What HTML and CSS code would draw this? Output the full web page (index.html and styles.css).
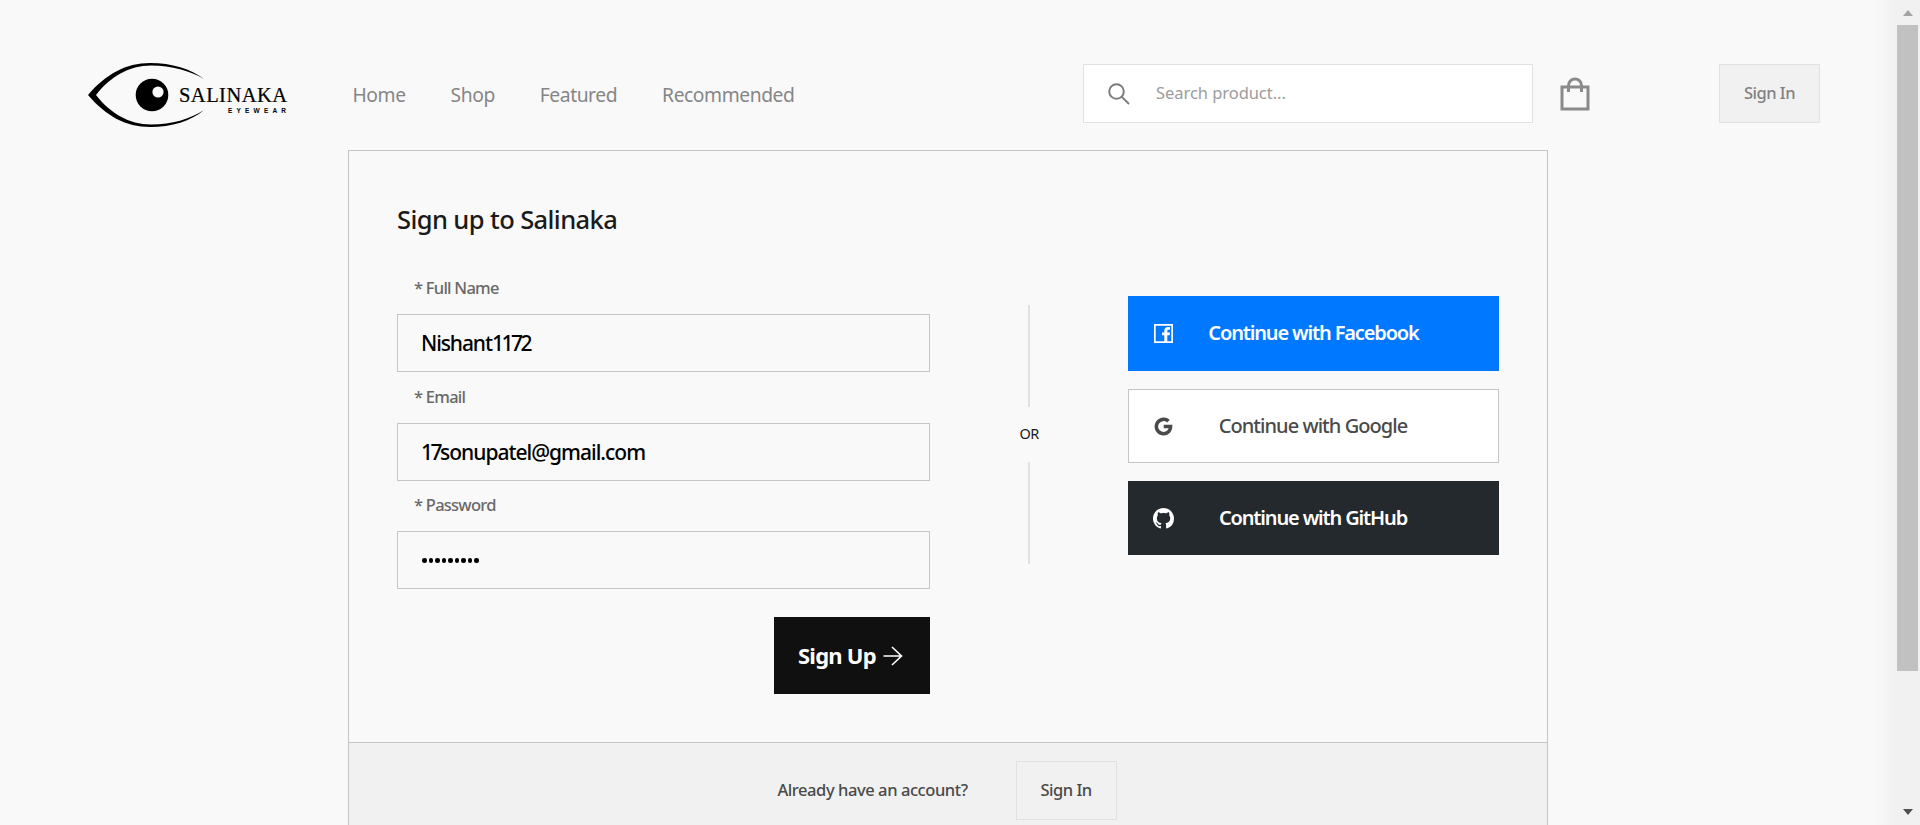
FILE: index.html
```html
<!DOCTYPE html>
<html lang="en">
<head>
<meta charset="utf-8">
<title>Sign up to Salinaka</title>
<link rel="stylesheet" href="styles.css">
</head>
<body>
<div class="app">
  <div class="page">
    <header class="navigation">
      <svg class="logo" viewBox="0 0 204 70" width="204" height="70">
        <path d="M0 35C18 14 38 3 62 3C84 3 103 9 116 19C102 11 84 5.500 63 5.500C41 5.500 22 17 8 35C22 53 41 64.500 63 64.500C84 64.500 102 59 116 50C103 61 84 67 62 67C38 67 18 56 0 35Z"/>
        <circle cx="64" cy="35" r="16.300"/>
        <circle class="logo-glint" cx="70" cy="32" r="5.600"/>
        <text class="logo-name" x="91" y="42" textLength="108">SALINAKA</text>
        <text class="logo-sub" x="140" y="53.300" textLength="58">EYEWEAR</text>
      </svg>
      <nav class="menu">
        <a>Home</a><a>Shop</a><a>Featured</a><a>Recommended</a>
      </nav>
      <div class="searchbar">
        <svg viewBox="0 0 22 22" width="22" height="22"><circle cx="8.500" cy="8.500" r="7.300"/><path d="M13.600 13.600L21 21"/></svg>
        <span>Search product...</span>
      </div>
      <svg class="bag" viewBox="0 0 30 34" width="30" height="34"><path d="M2 10H28V32H2ZM8.500 15V8.500a6.500 6.500 0 0 1 13 0V15"/></svg>
      <button class="btn-light btn-muted">Sign In</button>
    </header>
    <main class="card">
      <section class="signup">
        <form class="form">
          <h1>Sign up to Salinaka</h1>
          <label class="label">* Full Name</label>
          <div class="field"><span>Nishant<span class="digits">1172</span></span></div>
          <label class="label">* Email</label>
          <div class="field field-email"><span><span class="digits">17</span>sonupatel@gmail.com</span></div>
          <label class="label">* Password</label>
          <div class="field dots"><i></i><i></i><i></i><i></i><i></i><i></i><i></i><i></i><i></i></div>
          <button class="submit"><span>Sign Up</span>
            <svg viewBox="0 0 20 20" width="20" height="20"><path d="M0.500 10H18.500M9 1L18.500 10L9 19"/></svg></button>
        </form>
        <div class="divider"><span class="line"></span><span class="or">OR</span><span class="line"></span></div>
        <div class="social">
          <button class="provider facebook"><svg viewBox="0 0 19 19" width="19" height="19"><path fill-rule="evenodd" d="M0 0H19V19H0ZM1.700 1.700V17.300H10.300V11.300H8V8.600H10.300V6.800C10.300 4.300 11.700 3 14 3H16V5.700H14.600C13.700 5.700 13.300 6.100 13.300 7V8.600H16L15.600 11.300H13.300V17.300H17.300V1.700Z"/></svg><span>Continue with Facebook</span></button>
          <button class="provider google"><svg viewBox="0 0 19 19" width="19" height="19"><path d="M9.700 7.800H18.300C18.900 13.500 15.500 18.500 9.600 18.500A9 9 0 1 1 15.700 2.900L13.100 5.400A5.400 5.400 0 1 0 14.700 11.200H9.700Z"/></svg><span>Continue with Google</span></button>
          <button class="provider github"><svg viewBox="0 0 16 16" width="21" height="21"><path d="M8 0C3.580 0 0 3.580 0 8c0 3.540 2.290 6.530 5.470 7.590.4.070.55-.17.55-.38 0-.19-.01-.82-.01-1.490-2.010.37-2.530-.49-2.690-.94-.09-.23-.48-.94-.82-1.130-.28-.15-.68-.52-.01-.53.63-.01 1.080.58 1.230.82.720 1.210 1.870.87 2.330.66.070-.52.28-.87.51-1.070-1.780-.2-3.640-.89-3.640-3.950 0-.87.31-1.590.82-2.150-.08-.2-.36-1.020.08-2.120 0 0 .67-.21 2.200.82.640-.18 1.320-.27 2-.27s1.360.09 2 .27c1.530-1.040 2.200-.82 2.200-.82.440 1.100.16 1.920.08 2.120.51.560.82 1.270.82 2.150 0 3.070-1.870 3.750-3.650 3.950.29.250.54.730.54 1.480 0 1.070-.01 1.930-.01 2.200 0 .21.150.46.550.38A8.010 8.010 0 0 0 16 8c0-4.420-3.580-8-8-8z"/></svg><span>Continue with GitHub</span></button>
        </div>
      </section>
      <footer class="signin"><span class="signin-text">Already have an account?</span><button class="btn-light">Sign In</button></footer>
    </main>
  </div>
  <aside class="scrollbar"><span class="arrow up"></span><span class="thumb"></span><span class="arrow down"></span></aside>
</div>
</body>
</html>
```
FILE: styles.css
```css
* { box-sizing: border-box; }
body { margin: 0; background: #f9f9f9; color: #1a1a1a; font-family: "Noto Sans", "Open Sans", sans-serif; overflow: hidden; }
button { font: inherit; border: 0; padding: 0; border-radius: 0; }
.app { display: flex; height: 825px; overflow: hidden; }
.page { width: 1895px; height: 825px; overflow: hidden; background: linear-gradient(to right, #f9f9f9 1875px, #f0f0f0 1895px); }
.navigation { display: flex; align-items: center; height: 150px; padding: 37px 75px 0 88px; }
.logo { flex: none; margin-top: 3px; }
.logo-glint { fill: #f9f9f9; }
.logo-name { font: 20.500px "Liberation Serif", serif; stroke: #000; stroke-width: 0.2; }
.logo-sub { font: bold 6.500px "Liberation Sans", sans-serif; }
.menu { display: flex; margin: 1px 0 0 60.500px; gap: 45px; font-size: 19.300px; letter-spacing: -0.45px; font-weight: 450; color: #868686; }
.searchbar { display: flex; align-items: center; width: 450px; height: 59px; margin-left: auto; padding-left: 24px; gap: 26px; background: #fff; border: 1px solid #e1e1e1; font-size: 16.500px; color: #9c9c9c; letter-spacing: -0.05px; }
.searchbar span { padding-bottom: 2px; }
.searchbar svg { fill: none; stroke: #7d7d7d; stroke-width: 2; }
.bag { margin: 0 129px 0 27px; fill: none; stroke: #8a8a8a; stroke-width: 3; }
.btn-light { width: 101px; height: 59px; padding-bottom: 3px; background: #f1f1f1; border: 1px solid #e1e1e1; color: #4a4a4a; font-size: 16.500px; font-weight: 500; letter-spacing: -0.5px; }
.btn-muted { color: #818181; }
.card { width: 1200px; margin-left: 348px; border: 1px solid #c5c5c5; }
.signup { display: flex; height: 592px; padding: 48px; border-bottom: 1px solid #c5c5c5; }
.form { display: flex; flex-direction: column; width: 533px; }
h1 { height: 68px; margin: 0; font-size: 25.500px; line-height: 40px; font-weight: 500; letter-spacing: -0.6px; }
.label { height: 47px; padding: 9px 0 0 17px; font-size: 16.500px; line-height: 23px; font-weight: 500; letter-spacing: -0.75px; color: #696868; }
.field { display: flex; flex: none; align-items: center; height: 58px; padding-left: 23px; margin-bottom: 4px; border: 1px solid #c5c5c5; font-size: 21px; font-weight: 500; letter-spacing: -1.100px; color: #000; }
.field-email { margin-top: 1px; margin-bottom: 3px; letter-spacing: -1px; }
.digits { letter-spacing: -2.500px; }
.dots { padding-left: 24px; }
.dots i { width: 4.500px; height: 4.500px; margin-right: 2px; border-radius: 50%; background: #000; }
.submit { display: flex; align-items: center; align-self: flex-end; width: 156px; height: 77px; margin-top: 24px; padding-left: 24px; gap: 7px; background: #101010; color: #fff; font-size: 22px; font-weight: 700; letter-spacing: -0.75px; }
.submit span { padding-bottom: 2px; }
.submit svg { fill: none; stroke: #fff; stroke-width: 1.600; }
.divider { display: flex; flex-direction: column; align-items: center; width: 198px; padding-top: 106px; }
.line { width: 2px; height: 102px; background: #e1e1e1; }
.or { height: 55px; line-height: 52px; font-size: 14.500px; letter-spacing: -0.7px; }
.social { display: flex; flex-direction: column; gap: 18px; width: 371px; padding-top: 97px; }
.provider { display: flex; align-items: center; height: 74px; padding-left: 26px; font-size: 20px; font-weight: 600; letter-spacing: -1.150px; color: #fff; }
.provider svg { flex: none; fill: currentColor; }
.provider span { flex: 1; padding: 0 45px 2px 0; text-align: center; }
.facebook { height: 75px; background: #0078ff; }
.google { padding-left: 25px; background: #fff; border: 1px solid #c5c5c5; color: #4a4a4a; font-weight: 500; letter-spacing: -0.95px; }
.github { padding-left: 25px; background: #24292e; }
.github span { padding-right: 47px; }
.signin { display: flex; align-items: center; height: 95px; justify-content: center; gap: 48px; padding-right: 2px; background: #f1f1f1; color: #4a4a4a; font-size: 16.500px; font-weight: 500; letter-spacing: -0.43px; }
.signin-text { padding-bottom: 3px; }
.scrollbar { display: flex; flex-direction: column; align-items: center; width: 25px; height: 825px; background: #f1f1f1; }
.arrow { border: 5.500px solid transparent; border-top-width: 0; border-bottom-width: 0; }
.up { margin: 10px 0 9px; border-bottom: 6px solid #a3a3a3; }
.thumb { width: 21px; height: 646px; background: #c1c1c1; }
.down { margin-top: 138px; border-top: 6px solid #505050; }
```
